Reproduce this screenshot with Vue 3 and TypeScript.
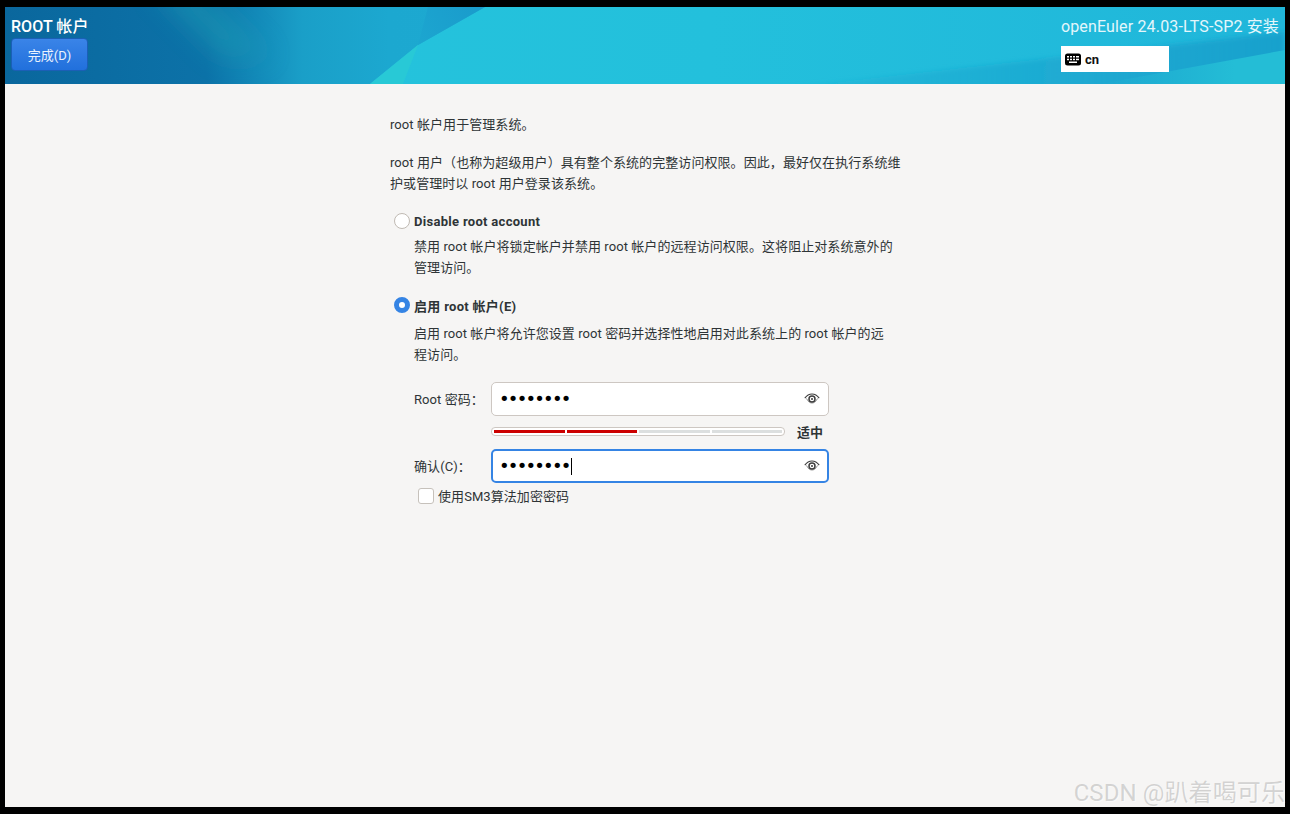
<script setup lang="ts">
const dots = "••••••••";
</script>

<template>
  <div class="frame">
    <div class="window">
      <header class="header">
        <svg class="header-art" width="1280" height="77" viewBox="0 0 1280 77" preserveAspectRatio="none" aria-hidden="true">
          <defs>
            <linearGradient id="rightBase" x1="0" y1="0" x2="1" y2="0">
              <stop offset="0" stop-color="#26c5dc" />
              <stop offset="0.55" stop-color="#23c0dc" />
              <stop offset="1" stop-color="#20b6da" />
            </linearGradient>
            <linearGradient id="leftBase" x1="0" y1="0" x2="480" y2="0" gradientUnits="userSpaceOnUse">
              <stop offset="0" stop-color="#0a679d" />
              <stop offset="0.42" stop-color="#0c72a8" />
              <stop offset="0.62" stop-color="#1a9fc8" />
              <stop offset="0.8" stop-color="#1ca8d0" />
              <stop offset="1" stop-color="#1da9d1" />
            </linearGradient>
            <linearGradient id="lowBand" x1="700" y1="77" x2="1280" y2="77" gradientUnits="userSpaceOnUse">
              <stop offset="0" stop-color="#1aa0cc" stop-opacity="0" />
              <stop offset="1" stop-color="#1aa0cc" stop-opacity="0.95" />
            </linearGradient>
            <linearGradient id="cornerWedge" x1="1095" y1="77" x2="1230" y2="77" gradientUnits="userSpaceOnUse">
              <stop offset="0" stop-color="#24bdd6" stop-opacity="0" />
              <stop offset="1" stop-color="#24bdd6" />
            </linearGradient>
            <linearGradient id="wedge" x1="413" y1="38" x2="470" y2="0" gradientUnits="userSpaceOnUse">
              <stop offset="0" stop-color="#1ca6d0" />
              <stop offset="1" stop-color="#1a9ccc" />
            </linearGradient>
            <filter id="soft" x="-60%" y="-60%" width="220%" height="220%">
              <feGaussianBlur stdDeviation="13" />
            </filter>
            <filter id="edge" x="-20%" y="-20%" width="140%" height="140%">
              <feGaussianBlur stdDeviation="2.500" />
            </filter>
          </defs>
          <rect width="1280" height="77" fill="url(#rightBase)" />
          <polygon points="700,90 1280,25 1280,90" fill="url(#lowBand)" filter="url(#edge)" />
          <polygon points="1095,77 1280,43 1280,77" fill="url(#cornerWedge)" />
          <polygon points="0,0 480,0 413,38 365,77 0,77" fill="url(#leftBase)" />
          <polygon points="145,-20 195,-20 265,50 215,50" fill="#1a9cb4" opacity="0.55" filter="url(#soft)" />
          <polygon points="423,0 480,0 413,38" fill="url(#wedge)" />
          <polygon points="413,38 365,77 398,77" fill="#28c9d6" />
        </svg>
        <div class="header-left">
          <div class="title">ROOT 帐户</div>
          <button class="done" type="button">完成(D)</button>
        </div>
        <div class="header-right">
          <div class="product">openEuler 24.03-LTS-SP2 安装</div>
          <div class="layout-box">
            <svg class="kbd" width="16" height="13" viewBox="0 0 16 13">
              <rect x="0" y="0.5" width="16" height="12" rx="2.5" fill="#000" />
              <g fill="#fff">
                <rect x="2" y="3" width="2" height="1.5" /><rect x="5" y="3" width="2" height="1.5" /><rect x="8" y="3" width="2" height="1.5" /><rect x="11" y="3" width="3" height="1.5" />
                <rect x="2" y="5.7" width="2" height="1.5" /><rect x="5" y="5.7" width="2" height="1.5" /><rect x="8" y="5.7" width="2" height="1.5" /><rect x="11" y="5.7" width="3" height="1.5" />
                <rect x="4" y="8.5" width="8" height="1.5" />
              </g>
            </svg>
            <span>cn</span>
          </div>
        </div>
      </header>

      <main class="main">
        <section class="column">
          <p class="intro">root 帐户用于管理系统。</p>
          <p class="intro second">root 用户（也称为超级用户）具有整个系统的完整访问权限。因此，最好仅在执行系统维护或管理时以 root 用户登录该系统。</p>

          <div class="option first-option">
            <span class="radio"></span>
            <div class="option-label">Disable root account</div>
          </div>
          <p class="desc">禁用 root 帐户将锁定帐户并禁用 root 帐户的远程访问权限。这将阻止对系统意外的管理访问。</p>

          <div class="option second-option">
            <span class="radio on"></span>
            <div class="option-label">启用 root 帐户(E)</div>
          </div>
          <p class="desc desc-two">启用 root 帐户将允许您设置 root 密码并选择性地启用对此系统上的 root 帐户的远程访问。</p>

          <div class="form">
            <label class="field-label">Root 密码：</label>
            <div class="entry">
              <span class="dots">{{ dots }}</span>
              <svg class="eye" width="16" height="12" viewBox="0 0 16 12" fill="none" stroke="#3d3d3d">
                <path d="M0.8 5.2C3 2.2 5.4 1 8 1s5 1.2 7.2 4.2" stroke-width="1.1" />
                <path d="M2.5 5.5C4.2 8.8 6 10 8 10s3.8-1.2 5.5-4.500" stroke-width="0.8" stroke="#777" />
                <circle cx="8" cy="6" r="3" stroke-width="1.5" />
                <circle cx="8" cy="6" r="1" fill="#3d3d3d" stroke="none" />
              </svg>
            </div>
            <div class="strength-row">
              <div class="strength">
                <span class="seg red"></span><span class="seg red"></span><span class="seg"></span><span class="seg"></span>
              </div>
              <span class="strength-text">适中</span>
            </div>
            <label class="field-label">确认(C)：</label>
            <div class="entry focus">
              <span class="dots">{{ dots }}</span><span class="caret"></span>
              <svg class="eye" width="16" height="12" viewBox="0 0 16 12" fill="none" stroke="#3d3d3d">
                <path d="M0.8 5.2C3 2.2 5.4 1 8 1s5 1.2 7.2 4.2" stroke-width="1.1" />
                <path d="M2.5 5.5C4.2 8.8 6 10 8 10s3.8-1.2 5.5-4.500" stroke-width="0.8" stroke="#777" />
                <circle cx="8" cy="6" r="3" stroke-width="1.5" />
                <circle cx="8" cy="6" r="1" fill="#3d3d3d" stroke="none" />
              </svg>
            </div>
          </div>

          <div class="check-row">
            <span class="check"></span>
            <span class="check-text">使用SM3算法加密密码</span>
          </div>
        </section>
        <div class="watermark">CSDN @趴着喝可乐</div>
      </main>
    </div>
  </div>
</template>

<style>
html, body { margin: 0; background: #000; }
</style>

<style scoped>
* { box-sizing: border-box; }
.frame {
  width: 1290px;
  height: 814px;
  background: #000;
  padding: 7px 5px;
  font-family: Roboto, "Noto Sans CJK SC", sans-serif;
  font-size: 13px;
  letter-spacing: 0.07px;
  color: #2e3436;
  overflow: hidden;
}
.window {
  height: 800px;
  display: flex;
  flex-direction: column;
  background: #f6f5f4;
}
.header {
  position: relative;
  height: 77px;
  display: flex;
  justify-content: space-between;
  padding: 9px 6px 0 6px;
  color: #fff;
  overflow: hidden;
}
.header-art { position: absolute; inset: 0; }
.header-left, .header-right { position: relative; display: flex; flex-direction: column; align-items: flex-start; }
.title { font-size: 16px; font-weight: 500; line-height: 21px; letter-spacing: 0.05px; }
.done {
  margin-top: 1px;
  width: 77px;
  height: 33px;
  border: 1px solid #1b5fb6;
  border-radius: 4px;
  background: linear-gradient(#3a84e8, #2170dc);
  color: #eaf2fd;
  font: inherit;
  font-size: 13px;
  padding: 0;
}
.product { font-size: 16px; line-height: 21px; color: #e4f6fb; letter-spacing: 0.16px; }
.layout-box {
  margin-top: 9px;
  width: 108px;
  height: 26px;
  background: #fff;
  color: #111;
  display: flex;
  align-items: center;
  gap: 4px;
  padding-left: 4px;
  font-weight: 700;
  font-size: 13px;
}
.main { position: relative; flex: 1; }
.column { width: 515px; margin-left: 385px; padding-top: 30px; }
p { margin: 0; line-height: 21px; }
.second { margin-top: 17px; }
.option { display: flex; align-items: center; gap: 4px; margin-left: 4px; height: 18px; }
.first-option { margin-top: 18px; }
.second-option { margin-top: 18px; }
.radio {
  width: 16px; height: 16px; border-radius: 50%;
  border: 1px solid #c0bab3; background: #fff; flex: none;
}
.radio.on { border: 5px solid #3584e4; }
.option-label { font-weight: 700; color: #2e3436; letter-spacing: 0.3px; }
.desc { margin: 6px 0 0 24px; width: 480px; }
.desc-two { margin-top: 9px; }
.form {
  margin: 17px 0 0 24px;
  display: grid;
  grid-template-columns: 77px 338px;
  align-items: center;
}
.field-label { color: #2e3436; padding-bottom: 2px; }
.entry {
  position: relative;
  height: 34px;
  background: #fff;
  border: 1px solid #cdc7c2;
  border-radius: 5px;
  display: flex;
  align-items: center;
  padding-left: 7px;
  color: #000;
}
.entry.focus { border: 2px solid #3584e4; padding-left: 6px; }
.dots { font-size: 18px; letter-spacing: -1.8px; font-family: "DejaVu Sans", sans-serif; line-height: 1; }
.caret { width: 1px; height: 17px; background: #000; margin-left: 1px; }
.eye { position: absolute; right: 8px; top: 10px; }
.entry.focus .eye { right: 7px; top: 9px; }
.strength-row {
  grid-column: 2;
  display: flex;
  align-items: center;
  height: 33px;
  padding-bottom: 2px;
}
.strength {
  width: 294px;
  height: 9px;
  border: 1px solid #cdc7c2;
  border-radius: 4px;
  background: #fff;
  display: flex;
  gap: 2px;
  padding: 2px 2px;
}
.seg { flex: 1; background: #dcdfdf; }
.seg.red { background: #cc0000; }
.strength-text { margin-left: 12px; font-weight: 700; }
.check-row { display: flex; align-items: center; gap: 4px; margin: 3px 0 0 28px; height: 20px; }
.check-text { padding-bottom: 2px; }
.check {
  width: 16px; height: 16px;
  border: 1px solid #c6c1bb; border-radius: 3px; background: #fff; flex: none;
}
.watermark {
  position: absolute;
  right: 0;
  bottom: -2px;
  font-size: 24px;
  line-height: 32px;
  color: rgba(150,150,150,.38);
  text-shadow: 1px 1px 0 rgba(255,255,255,.5);
  white-space: nowrap;
  letter-spacing: 0.1px;
}
</style>
